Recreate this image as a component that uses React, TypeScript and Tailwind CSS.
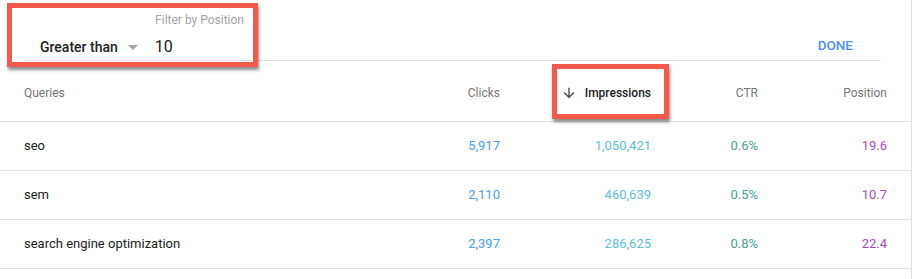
import React from "react";

interface Row {
  query: string;
  clicks: string;
  impressions: string;
  ctr: string;
  position: string;
}

const rows: Row[] = [
  { query: "seo", clicks: "5,917", impressions: "1,050,421", ctr: "0.6%", position: "19.6" },
  { query: "sem", clicks: "2,110", impressions: "460,639", ctr: "0.5%", position: "10.7" },
  {
    query: "search engine optimization",
    clicks: "2,397",
    impressions: "286,625",
    ctr: "0.8%",
    position: "22.4",
  },
];

const gridCols = "grid grid-cols-[1fr_100px_151px_107px_129px] pl-6 pr-[24px]";

const ArrowDown = () => (
  <svg width="16" height="16" viewBox="0 0 24 24" fill="#424242">
    <path d="M20 12l-1.41-1.41L13 16.17V4h-2v12.17l-5.58-5.59L4 12l8 8 8-8z" />
  </svg>
);

const App = () => {
  return (
    <div
      className="relative h-[279px] w-[914px] overflow-hidden bg-white"
      style={{ fontFamily: "Roboto, 'Liberation Sans', sans-serif" }}
    >
      <div className="h-full w-[912px] border-r border-r-[#e0e0e0]">
        {/* filter bar */}
        <div className="mx-[23px] mr-[30px] flex h-[61px] items-start border-b border-b-[#e0e0e0]">
          <div className="flex w-[221px] flex-col">
            <div className="mt-[13px] h-[14px] text-right text-[12px] leading-[14px] text-[#a3a3a3]">
              Filter by Position
            </div>
            <div className="mt-[11px] flex items-center">
              <span className="ml-[17px] text-[14px] font-medium leading-[18px] text-[#212121]">
                Greater than
              </span>
              <span className="ml-[10px] mt-[1px] h-0 w-0 border-x-[5px] border-t-[5px] border-x-transparent border-t-[#a3a3a3]" />
              <span className="ml-[17px] text-[16px] leading-[18px] text-[#212121]">10</span>
            </div>
          </div>
          <div className="ml-auto mr-[28px] mt-[37px] text-[13.5px] font-medium leading-[16px] text-[#4d8ef3]">
            DONE
          </div>
        </div>

        {/* header */}
        <div className={`${gridCols} h-[61px] items-center border-b border-b-[#e0e0e0] text-[12px] text-[#757575]`}>
          <div className="mt-[3px]">Queries</div>
          <div className="mt-[3px] text-right">Clicks</div>
          <div className="mt-[3px] flex items-center justify-end gap-[8px] font-medium text-[#212121]">
            <ArrowDown />
            Impressions
          </div>
          <div className="mt-[3px] text-right">CTR</div>
          <div className="mt-[3px] text-right">Position</div>
        </div>

        {/* rows */}
        {rows.map((row) => (
          <div
            key={row.query}
            className={`${gridCols} h-[49px] items-center border-b border-b-[#e0e0e0] text-[13px]`}
          >
            <div className="text-[#212121]">{row.query}</div>
            <div className="text-right text-[#46a0f3]">{row.clicks}</div>
            <div className="text-right text-[#5cc0dc]">{row.impressions}</div>
            <div className="text-right text-[#48a08f]">{row.ctr}</div>
            <div className="text-right text-[#a84cbd]">{row.position}</div>
          </div>
        ))}
      </div>

      {/* annotation boxes */}
      <div className="pointer-events-none absolute left-[7px] top-[3px] h-[64px] w-[251px] border-[5px] border-[#f4594b] shadow-[1px_3px_3px_rgba(0,0,0,0.45)]" />
      <div className="pointer-events-none absolute left-[552px] top-[64px] h-[55px] w-[117px] border-[5px] border-[#f4594b] shadow-[1px_3px_3px_rgba(0,0,0,0.45)]" />
    </div>
  );
};

export default App;
